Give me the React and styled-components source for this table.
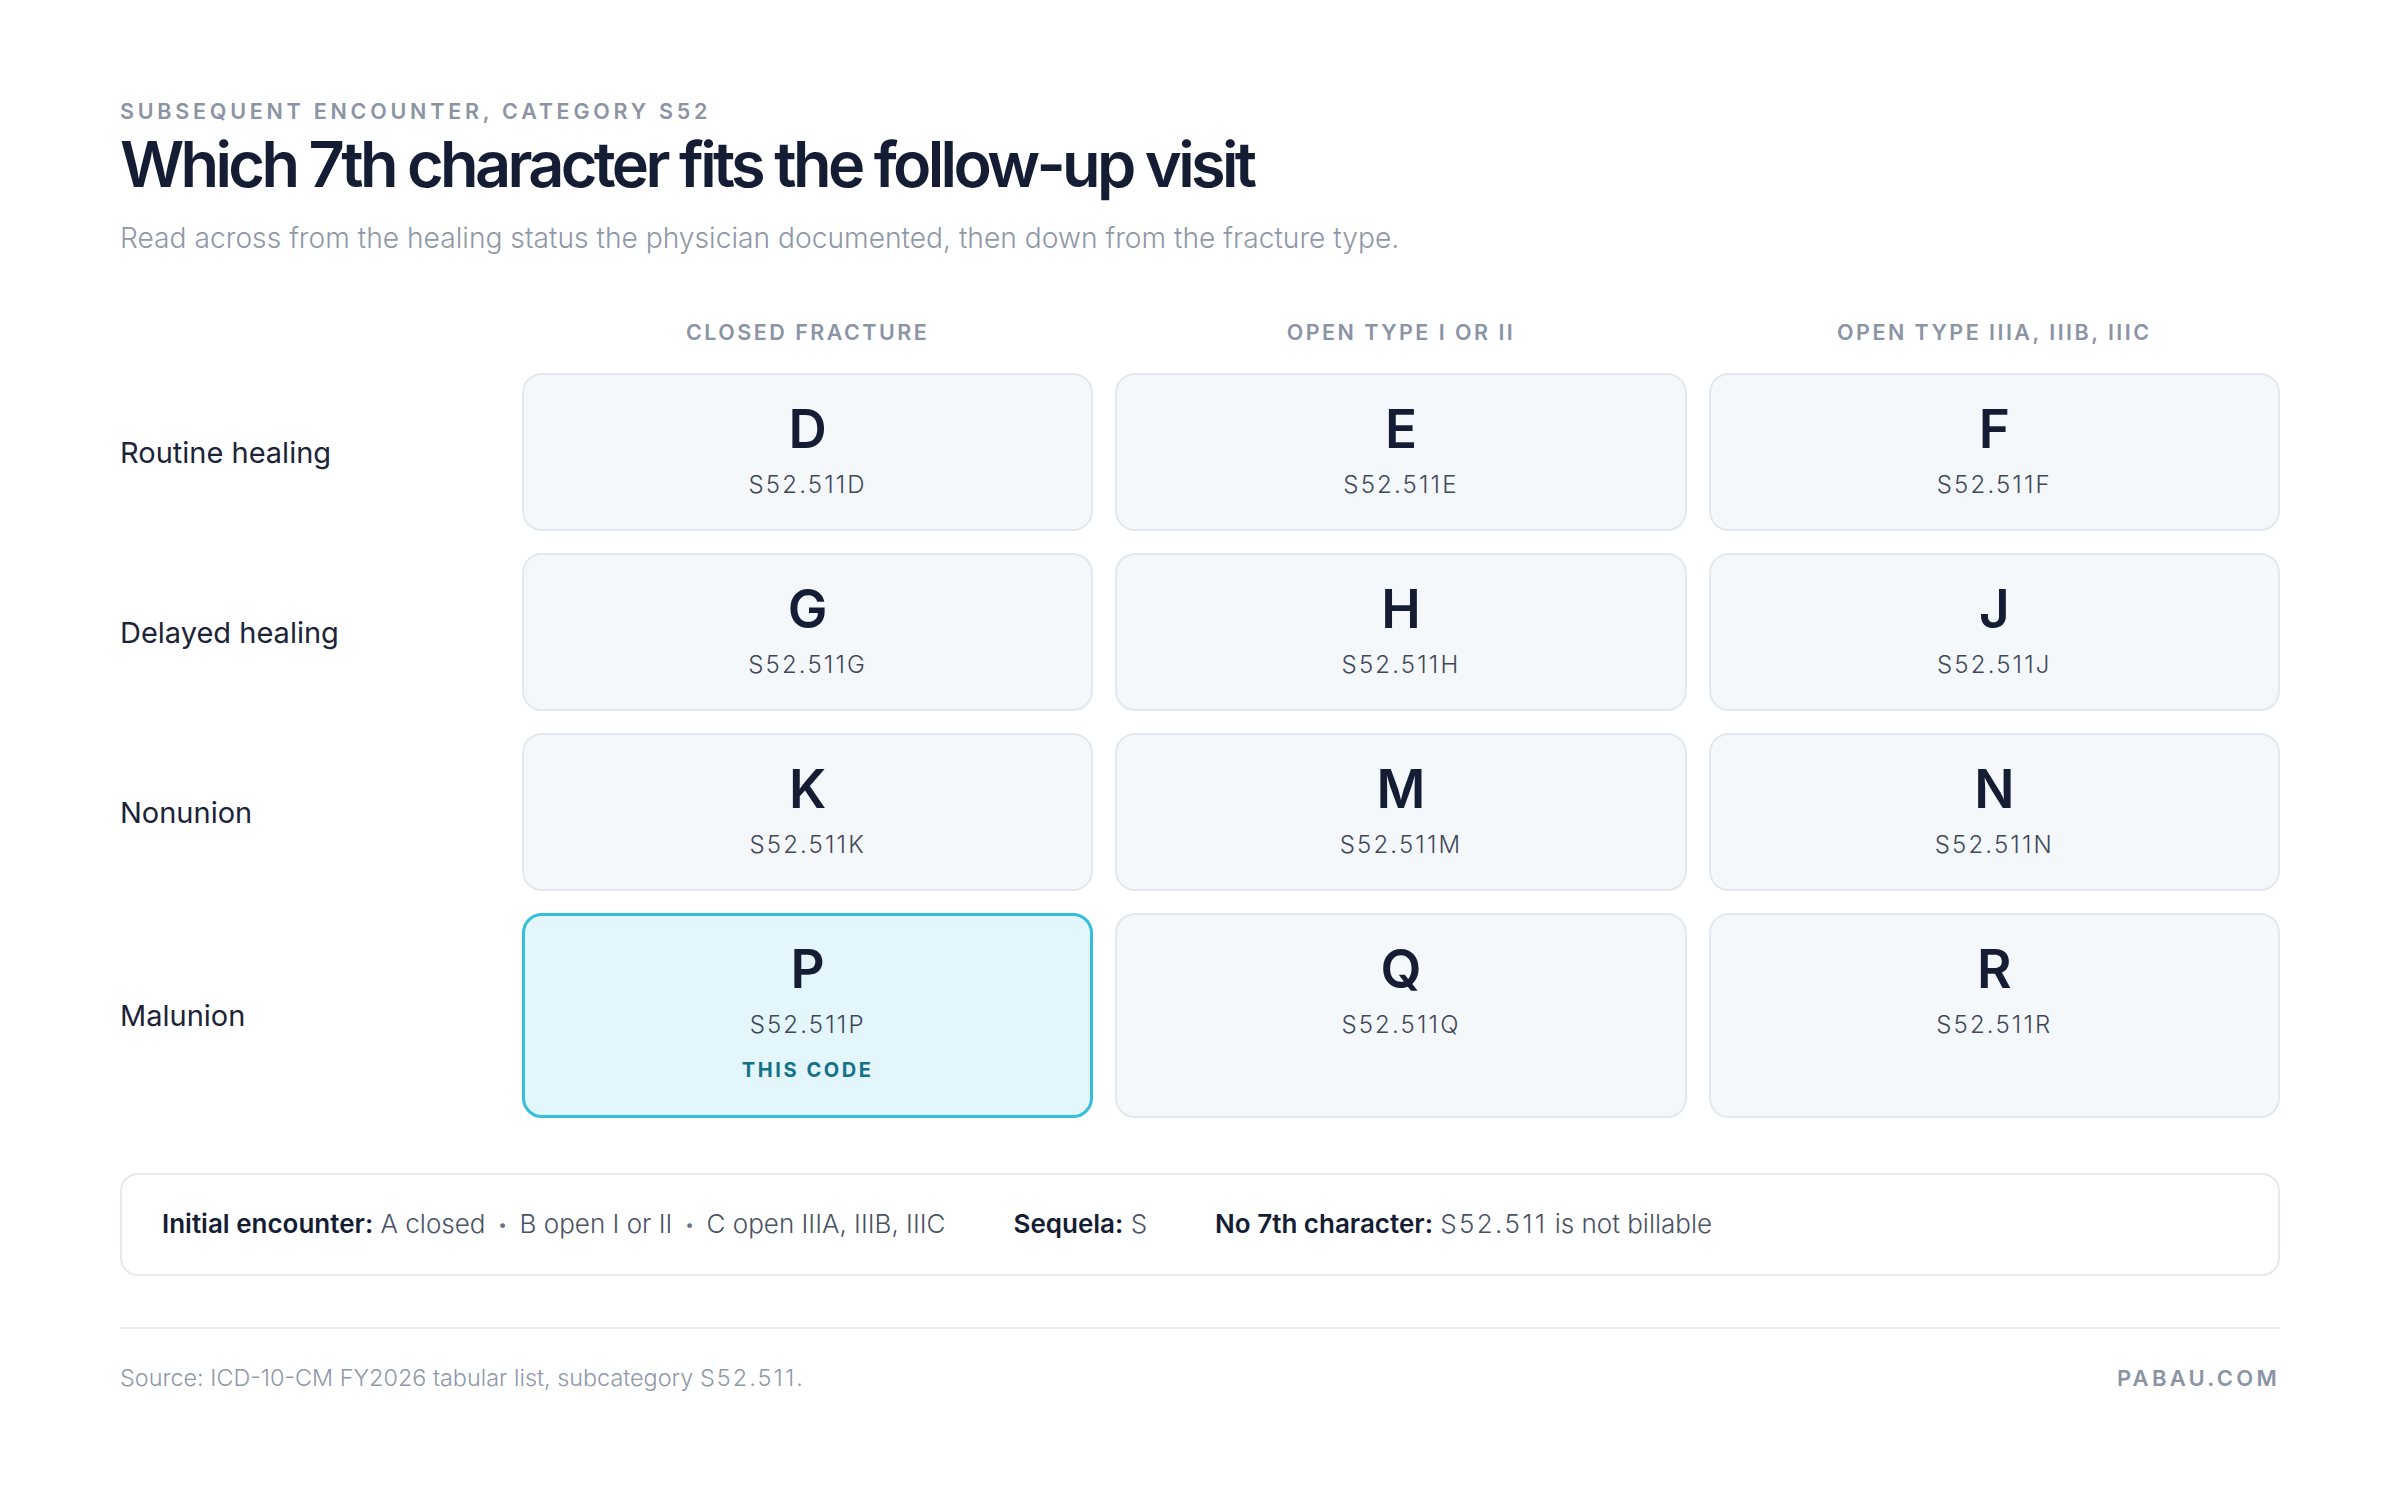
import styled, { createGlobalStyle } from 'styled-components';

const Global = createGlobalStyle`
  body {
    margin: 0;
    background: #ffffff;
    font-family: Inter, "Noto Sans", sans-serif;
    color: #141d33;
  }
`

const Page = styled.main`
  padding: 98px 120px 80px;
  display: flex;
  flex-direction: column;
`

const Eyebrow = styled.div`
  font-size: 21.5px;
  line-height: 26px;
  font-weight: 600;
  letter-spacing: 0.175em;
  color: #8b94a5;
`

const Title = styled.h1`
  margin: 2px 0 0;
  font-size: 63px;
  line-height: 76px;
  font-weight: 600;
  letter-spacing: -0.058em;
  color: #141d33;
`

const Subtitle = styled.p`
  margin: 18px 0 0;
  font-size: 28.2px;
  line-height: 36px;
  font-weight: 300;
  color: #8f98a8;
`

const Grid = styled.div`
  margin-top: 63px;
  display: grid;
  grid-template-columns: 380px repeat(3, 1fr);
  grid-template-rows: 32px 158px 158px 158px 205px;
  column-gap: 22px;
  row-gap: 22px;
`

const ColHead = styled.div`
  text-align: center;
  font-size: 21.5px;
  line-height: 26px;
  font-weight: 600;
  letter-spacing: 0.115em;
  color: #8b94a5;
`

const RowLabel = styled.div`
  display: flex;
  align-items: center;
  font-size: 29px;
  color: #1b2438;
`

const Cell = styled.div`
  display: flex;
  flex-direction: column;
  align-items: center;
  justify-content: ${p => (p.$tall ? 'flex-start' : 'center')};
  padding-top: ${p => (p.$tall ? (p.$active ? '23px' : '24px') : '0')};
  padding-bottom: ${p => (p.$tall ? '0' : '6px')};
  border-radius: 20px;
  border: ${p => (p.$active ? '3px solid #35bfdc' : '2px solid #e3e8ef')};
  background: ${p => (p.$active ? '#e2f6fb' : '#f5f8fb')};
  box-sizing: border-box;
`

const Letter = styled.div`
  font-size: 53px;
  line-height: 60px;
  font-weight: 600;
  color: #141d33;
`

const Code = styled.div`
  margin-top: 11px;
  font-size: 24px;
  line-height: 30px;
  font-weight: 300;
  letter-spacing: 0.09em;
  color: #3f4859;
`

const Tag = styled.div`
  margin-top: 18px;
  font-size: 20px;
  line-height: 24px;
  font-weight: 700;
  letter-spacing: 0.13em;
  color: #13728a;
`

const Legend = styled.div`
  margin-top: 55px;
  border: 2px solid #e6e9ee;
  border-radius: 18px;
  padding: 32px 40px;
  display: flex;
  gap: 68px;
  font-size: 26px;
  line-height: 34px;
  color: #4a5365;
`

const LegendItem = styled.span`
  white-space: nowrap;
  font-weight: 300;

  b {
    font-weight: 600;
    color: #141d33;
  }
`

const CodeRef = styled.span`
  letter-spacing: 0.09em;
`

const Dot = styled.span`
  display: inline-block;
  margin: 0 12px;
  color: #6b7384;
  font-size: 18px;
  vertical-align: 2px;
`

const Divider = styled.hr`
  margin: 51px 0 0;
  border: none;
  height: 2px;
  background: #e6e9ee;
`

const Footer = styled.footer`
  margin-top: 35px;
  display: flex;
  justify-content: space-between;
  align-items: center;
  font-size: 23.4px;
  line-height: 28px;
  font-weight: 300;
  color: #8f98a8;
`

const Brand = styled.span`
  font-weight: 600;
  letter-spacing: 0.15em;
  font-size: 22px;
  color: #8b94a5;
`

const columns = ['CLOSED FRACTURE', 'OPEN TYPE I OR II', 'OPEN TYPE IIIA, IIIB, IIIC']

const rows = [
  { label: 'Routine healing', letters: ['D', 'E', 'F'] },
  { label: 'Delayed healing', letters: ['G', 'H', 'J'] },
  { label: 'Nonunion', letters: ['K', 'M', 'N'] },
  { label: 'Malunion', letters: ['P', 'Q', 'R'], tall: true },
]

export default function App() {
  return (
    <Page>
      <Global />
      <Eyebrow>SUBSEQUENT ENCOUNTER, CATEGORY S52</Eyebrow>
      <Title>Which 7th character fits the follow-up visit</Title>
      <Subtitle>Read across from the healing status the physician documented, then down from the fracture type.</Subtitle>

      <Grid>
        <div />
        {columns.map(c => <ColHead key={c}>{c}</ColHead>)}
        {rows.map(r => (
          <>
            <RowLabel key={r.label}>{r.label}</RowLabel>
            {r.letters.map(l => {
              const active = l === 'P'
              return (
                <Cell key={l} $active={active} $tall={r.tall}>
                  <Letter>{l}</Letter>
                  <Code>S52.511{l}</Code>
                  {active && <Tag>THIS CODE</Tag>}
                </Cell>
              )
            })}
          </>
        ))}
      </Grid>

      <Legend>
        <LegendItem>
          <b>Initial encounter:</b> A closed<Dot>•</Dot>B open I or II<Dot>•</Dot>C open IIIA, IIIB, IIIC
        </LegendItem>
        <LegendItem><b>Sequela:</b> S</LegendItem>
        <LegendItem><b>No 7th character:</b> <CodeRef>S52.511</CodeRef> is not billable</LegendItem>
      </Legend>

      <Divider />
      <Footer>
        <span>Source: ICD-10-CM FY2026 tabular list, subcategory <CodeRef>S52.511</CodeRef>.</span>
        <Brand>PABAU.COM</Brand>
      </Footer>
    </Page>
  )
}
